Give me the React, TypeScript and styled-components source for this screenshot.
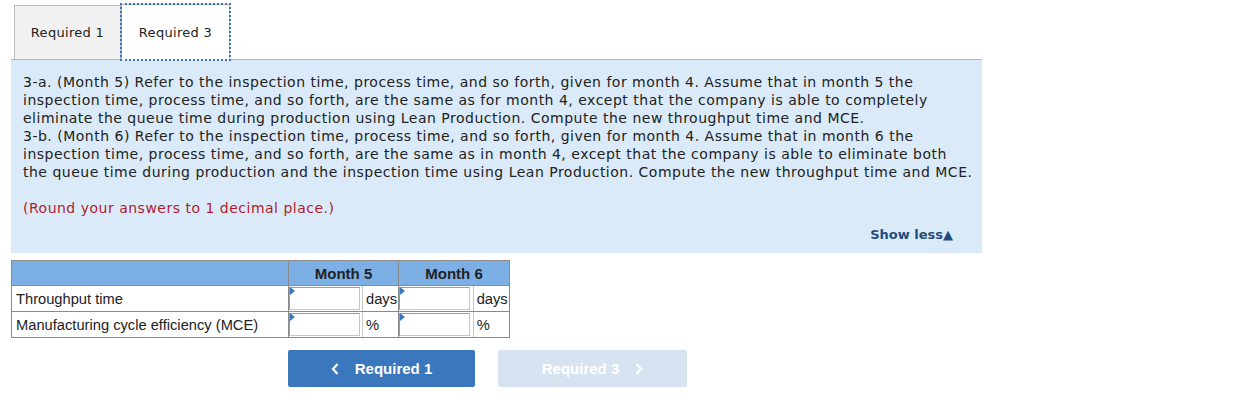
import React from "react"
import styled, { createGlobalStyle } from "styled-components"

const GlobalStyle = createGlobalStyle`
  html, body {
    margin: 0;
    padding: 0;
    background: #fff;
  }
  body {
    font-family: "DejaVu Sans", Verdana, sans-serif;
    color: #222;
  }
`

const Page = styled.div`
  width: 1252px;
  height: 419px;
  padding: 4px 0 0 11px;
  box-sizing: border-box;
`

const TabBar = styled.div`
  display: flex;
  align-items: flex-end;
  width: 971px;
  border-bottom: 1px solid #b8b8b8;
  padding-left: 3px;
  box-sizing: border-box;
`

const Tab = styled.div<{ active?: boolean }>`
  display: flex;
  align-items: center;
  justify-content: center;
  height: ${({ active }) => (active ? "56px" : "54px")};
  box-sizing: border-box;
  font-size: 13px;
  letter-spacing: 0.3px;
  color: #222;
  background: ${({ active }) => (active ? "#fff" : "#f1f1f1")};
  border: 1px solid #bbb;
  border-bottom: none;
  outline: ${({ active }) => (active ? "2px dotted #3b75bd" : "none")};
  outline-offset: -1px;
  margin-bottom: ${({ active }) => (active ? "-1px" : "0")};
  width: ${({ active }) => (active ? "109px" : "107px")};
`

const Panel = styled.div`
  width: 971px;
  background: #dbeaf8;
  padding: 13px 12px 9px 12px;
  box-sizing: border-box;
  font-size: 14px;
  line-height: 18px;
  letter-spacing: 0.5px;
`

const Para = styled.p`
  margin: 0;
  white-space: nowrap;
`

const Hint = styled.p`
  margin: 18px 0 0 0;
  color: #b01c2e;
`

const ShowLess = styled.div`
  display: flex;
  justify-content: flex-end;
  padding-right: 17px;
  margin-top: 9px;
  font-size: 13px;
  font-weight: bold;
  color: #1f4d80;
  letter-spacing: 0;
`

const Table = styled.table`
  margin-top: 7px;
  border-collapse: collapse;
  font-family: "Liberation Sans", Arial, sans-serif;
  font-size: 14.7px;
  color: #222;
`

const HeadCell = styled.th<{ w: number }>`
  width: ${({ w }) => w}px;
  height: 25px;
  padding: 0;
  background: #7cafe3;
  border: 1px solid #8a8a8a;
  font-weight: bold;
  font-size: 15px;
  text-align: center;
  box-sizing: border-box;
`

const LabelCell = styled.td`
  height: 25px;
  padding: 0 0 0 4px;
  border: 1px solid #8a8a8a;
  box-sizing: border-box;
`

const InputCell = styled.td`
  padding: 0;
  border: 1px solid #8a8a8a;
  border-right: none;
  height: 25px;
  position: relative;
`

const UnitCell = styled.td`
  padding: 0 0 0 3px;
  border: 1px solid #8a8a8a;
  border-left: 1px solid #c8c8c8;
  box-sizing: border-box;
`

const Field = styled.div`
  width: 71px;
  height: 23px;
  border: 1px solid #7b9fd0;
  border-right-color: #b7c9e2;
  border-bottom-color: #b7c9e2;
  box-sizing: border-box;
  background: #fff;
`

const Flag = styled.span`
  position: absolute;
  left: 1px;
  top: 1px;
  width: 0;
  height: 0;
  border-top: 4px solid transparent;
  border-bottom: 4px solid transparent;
  border-left: 5px solid #3d77c0;
`

const NavRow = styled.div`
  display: flex;
  gap: 23px;
  margin: 12px 0 0 277px;
`

const NavButton = styled.button<{ disabled?: boolean }>`
  display: flex;
  align-items: center;
  justify-content: center;
  gap: 16px;
  width: ${({ disabled }) => (disabled ? "189px" : "187px")};
  height: 37px;
  border: none;
  border-radius: 2px;
  background: ${({ disabled }) => (disabled ? "#d8e3f1" : "#3a77bc")};
  color: #fff;
  font-family: "Liberation Sans", Arial, sans-serif;
  font-weight: bold;
  font-size: 15px;
  padding: 0;
  cursor: pointer;
`

const Chevron = ({ dir }: { dir: "left" | "right" }) => (
  <svg width="8" height="12" viewBox="0 0 8 12">
    <path
      d={dir === "left" ? "M6.5 1 L2 6 L6.5 11" : "M1.5 1 L6 6 L1.5 11"}
      fill="none"
      stroke="#fff"
      strokeWidth="2.2"
    />
  </svg>
)

const rows = [
  { label: "Throughput time", unit: "days" },
  { label: "Manufacturing cycle efficiency (MCE)", unit: "%" },
]

export default function App() {
  return (
    <>
      <GlobalStyle />
      <Page>
        <TabBar>
          <Tab>Required 1</Tab>
          <Tab active>Required 3</Tab>
        </TabBar>
        <Panel>
          <Para>
            3-a. (Month 5) Refer to the inspection time, process time, and so forth, given for month 4. Assume that in month 5 the
            <br />
            inspection time, process time, and so forth, are the same as for month 4, except that the company is able to completely
            <br />
            eliminate the queue time during production using Lean Production. Compute the new throughput time and MCE.
          </Para>
          <Para>
            3-b. (Month 6) Refer to the inspection time, process time, and so forth, given for month 4. Assume that in month 6 the
            <br />
            inspection time, process time, and so forth, are the same as in month 4, except that the company is able to eliminate both
            <br />
            the queue time during production and the inspection time using Lean Production. Compute the new throughput time and MCE.
          </Para>
          <Hint>(Round your answers to 1 decimal place.)</Hint>
          <ShowLess>Show less▲</ShowLess>
        </Panel>
        <Table>
          <thead>
            <tr>
              <HeadCell w={277} />
              <HeadCell w={110} colSpan={2}>Month 5</HeadCell>
              <HeadCell w={111} colSpan={2}>Month 6</HeadCell>
            </tr>
          </thead>
          <tbody>
            {rows.map((r) => (
              <tr key={r.label}>
                <LabelCell>{r.label}</LabelCell>
                <InputCell>
                  <Field />
                  <Flag />
                </InputCell>
                <UnitCell>{r.unit}</UnitCell>
                <InputCell>
                  <Field />
                  <Flag />
                </InputCell>
                <UnitCell>{r.unit}</UnitCell>
              </tr>
            ))}
          </tbody>
        </Table>
        <NavRow>
          <NavButton>
            <Chevron dir="left" />
            Required 1
          </NavButton>
          <NavButton disabled>
            Required 3
            <Chevron dir="right" />
          </NavButton>
        </NavRow>
      </Page>
    </>
  )
}
